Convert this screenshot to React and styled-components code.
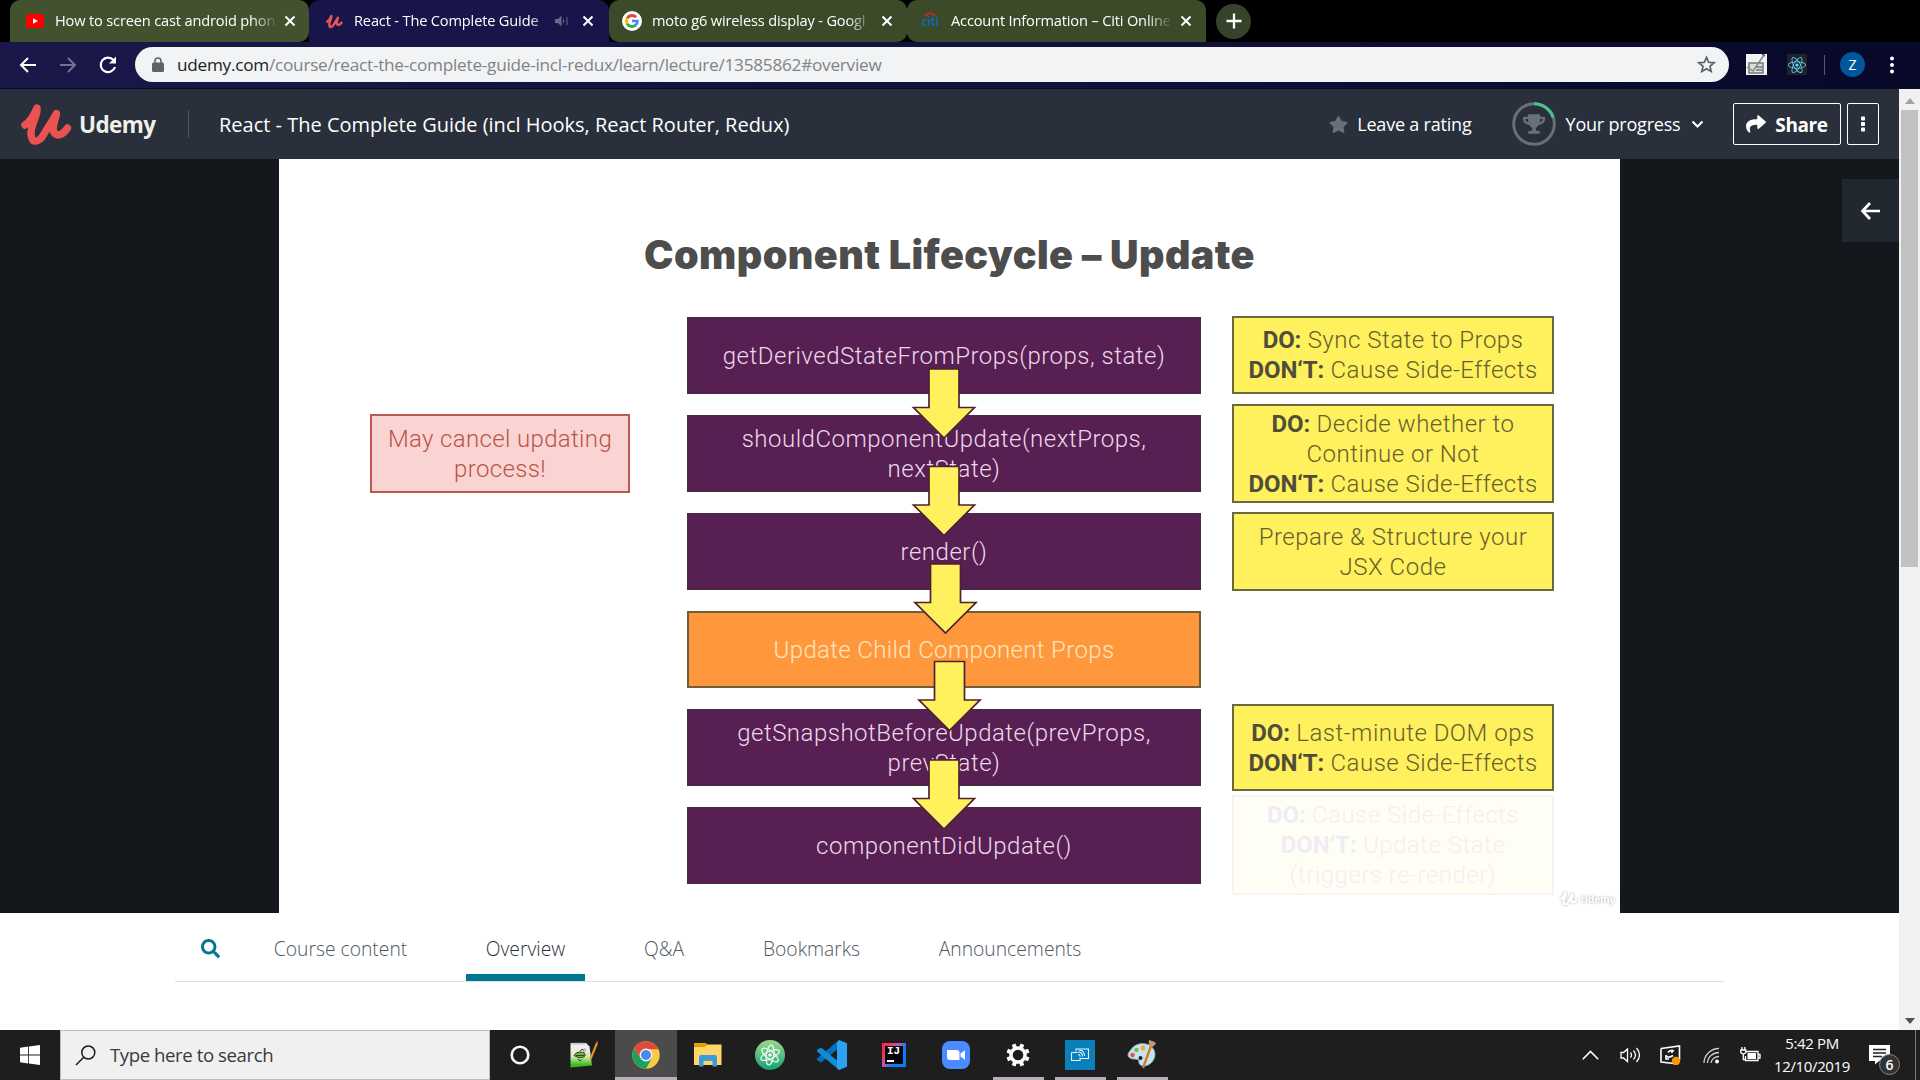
import React from "react";
import styled, { createGlobalStyle, css } from "styled-components";
import { FaStar, FaTrophy, FaShare, FaSearch, FaReact } from "react-icons/fa";

const UI = `"Open Sans", "Noto Sans", sans-serif`;

const GlobalStyle = createGlobalStyle`
  * { box-sizing: border-box; }
  body { margin: 0; background: #000; overflow: hidden; font-family: ${UI}; }
  svg { display: block; flex: none; }
`;

const Screen = styled.div`
  width: 1920px;
  height: 1080px;
  display: flex;
  flex-direction: column;
  overflow: hidden;
`;

const Label = styled.span`
  white-space: nowrap;
  margin: 0 ${(p) => p.$right || 0}px 0 ${(p) => p.$left || 0}px;
  padding-top: ${(p) => p.$drop || 0}px;
  font-size: ${(p) => p.$size}px;
  line-height: 24px;
  letter-spacing: ${(p) => p.$track || 0}px;
  font-weight: ${(p) => p.$weight || 400};
  color: ${(p) => p.$color || "#fff"};
`;

/* ---------- browser chrome ---------- */

const TabStrip = styled.div`
  height: 42px;
  flex: none;
  display: flex;
  align-items: center;
  padding-left: 10px;
  background: #000;
`;

const Tab = styled.div`
  width: ${(p) => p.$width}px;
  height: 42px;
  display: flex;
  align-items: center;
  border-radius: ${(p) => (p.$active ? "10px 10px 0 0" : "10px")};
  border-bottom-left-radius: ${(p) => (p.$first ? 0 : null)};
  border-bottom-right-radius: ${(p) => (p.$last ? 0 : null)};
  padding-left: ${(p) => p.$pad}px;
  background: ${(p) => (p.$active ? "#17154a" : p.$bg)};
  box-shadow: ${(p) => (p.$active ? "0 12px 0 #17154a" : "none")};
`;

const TabIcon = styled.div`
  width: ${(p) => p.$w}px;
  margin-right: ${(p) => p.$gap}px;
  display: flex;
`;

const TabTitle = styled.div`
  width: ${(p) => p.$width}px;
  overflow: hidden;
  white-space: nowrap;
  color: #fff;
  font-size: 14.6px;
  line-height: 24px;
  letter-spacing: -0.16px;
  mask-image: linear-gradient(to right, #000 calc(100% - 26px), transparent);
  margin-top: -2px;
`;

const TabClose = styled.div`
  width: 12px;
  margin-left: ${(p) => p.$left}px;
`;

const TabDivider = styled.div`
  width: 1px;
  height: 26px;
  margin-right: -1px;
  background: #8c9380;
`;

const NewTab = styled.div`
  width: 35px;
  height: 35px;
  margin-left: 10px;
  border-radius: 50%;
  background: #36432a;
  display: grid;
  place-items: center;
`;

const Toolbar = styled.div`
  height: 47px;
  flex: none;
  display: flex;
  align-items: flex-start;
  padding: 5px 0 0 18px;
  border-bottom: 1px solid #0a0a2a;
  background: linear-gradient(to right, #191849, #12123e 50%, #08082a);
`;

const NavButtons = styled.div`
  width: 117px;
  height: 35px;
  display: flex;
  align-items: center;
  gap: 20px;
`;

const AddressBar = styled.div`
  width: 1594px;
  height: 35px;
  border-radius: 18px;
  background: #f1f3f4;
  display: flex;
  align-items: center;
  padding: 0 13px 0 17px;
`;

const Url = styled.div`
  flex: 1;
  margin-left: 13px;
  font-size: 17.2px;
  line-height: 24px;
  letter-spacing: -0.25px;
  color: #7f8387;
  b { font-weight: 400; color: #202124; }
`;

const Extensions = styled.div`
  height: 35px;
  display: flex;
  align-items: center;
  padding-left: 17px;
`;

const ReactBadge = styled.div`
  width: 20px;
  height: 21px;
  margin-left: 20px;
  background: #20232a;
  display: grid;
  place-items: center;
  color: #61dafb;
`;

const ToolbarRule = styled.div`
  width: 1px;
  height: 20px;
  margin: 0 15px 0 17px;
  background: #56567a;
`;

const Avatar = styled.div`
  width: 25px;
  height: 25px;
  margin-right: 24px;
  border-radius: 50%;
  background: #01579b;
  color: #fff;
  font-size: 14px;
  line-height: 25px;
  text-align: center;
`;

/* ---------- page ---------- */

const Viewport = styled.div`
  height: 941px;
  flex: none;
  display: flex;
`;

const Page = styled.div`
  width: 1899px;
  display: flex;
  flex-direction: column;
  background: #fff;
`;

const Scrollbar = styled.div`
  width: 21px;
  background: #f1f1f1;
  display: flex;
  flex-direction: column;
  align-items: center;
  justify-content: space-between;
  padding: 9px 0 6px;
`;

const Thumb = styled.div`
  width: 17px;
  height: 457px;
  margin: 6px 0 auto;
  background: #c1c1c1;
`;

const Header = styled.header`
  height: 70px;
  flex: none;
  display: flex;
  align-items: center;
  padding: 0 20px 0 21px;
  background: #29303b;
`;

const Brand = styled.div`
  width: 117px;
  height: 28px;
  display: flex;
  align-items: center;
  border-right: 1px solid #505763;
  margin-right: 30px;
`;

const HeaderRight = styled.div`
  margin-left: auto;
  display: flex;
  align-items: center;
  color: #686f7a;
`;

const ProgressRing = styled.div`
  width: 44px;
  height: 44px;
  margin: 0 10px 0 40px;
  display: grid;
  place-items: center;
  > * { grid-area: 1 / 1; }
`;

const OutlineButton = styled.button`
  width: ${(p) => p.$width}px;
  height: 42px;
  margin-left: ${(p) => p.$left}px;
  padding: 0;
  display: flex;
  align-items: center;
  justify-content: center;
  gap: 9px;
  color: #fff;
  font-family: inherit;
  border: 1px solid #fff;
  border-radius: 2px;
  background: transparent;
`;

const Stage = styled.section`
  height: 754px;
  flex: none;
  display: flex;
  justify-content: space-between;
  background: #14171c;
  padding-left: 279px;
`;

const Slide = styled.div`
  position: relative;
  width: 1341px;
  height: 754px;
  background: #fff;
  font-family: Roboto, sans-serif;
`;

const SlideTitle = styled.h1`
  margin: 0;
  padding-top: 72px;
  height: 157px;
  text-align: center;
  font-family: Inter, sans-serif;
  font-weight: 900;
  font-size: 39.5px;
  line-height: 48px;
  letter-spacing: 0.4px;
  color: #4d4d4d;
`;

const Columns = styled.div`
  display: flex;
  align-items: flex-start;
  padding-left: 91px;
`;

const Column = styled.div`
  width: ${(p) => p.$width}px;
  margin-right: ${(p) => p.$right || 0}px;
  padding-top: ${(p) => p.$top || 0}px;
  display: flex;
  flex-direction: column;
`;

const tones = {
  purple: css`background: #581f52; border-color: #4b2847; color: #ecd8ea;`,
  orange: css`background: #ff983c; border-color: #705d3e; color: #ffe5bd; letter-spacing: 0.35px;`,
  pink: css`background: #f9d4d2; border-color: #bb5a51; color: #b9544b; letter-spacing: 0.35px;`,
  yellow: css`background: #fff05e; border-color: #6b683f; color: #66602c;`,
  ghost: css`
    background: #fffef5; border-color: #f9f2f4; color: #f4eef3;
    && b { color: #f0ecf6; }
  `,
};

const Box = styled.div`
  height: ${(p) => p.$height}px;
  margin-bottom: ${(p) => p.$gap}px;
  display: flex;
  flex-direction: column;
  justify-content: center;
  text-align: center;
  border: 2px solid;
  font-weight: 300;
  font-size: 24px;
  line-height: 30px;
  letter-spacing: 0.5px;
  white-space: nowrap;
  b { font-weight: 700; letter-spacing: -0.1px; color: #504e38; }
  ${(p) => tones[p.$tone]}
`;

const Overlay = styled.svg`
  position: absolute;
  left: 0;
  top: 0;
`;

const Watermark = styled.div`
  position: absolute;
  right: 5px;
  bottom: 7px;
  display: flex;
  align-items: center;
  gap: 3px;
  color: #fff;
  font: 700 10px/14px "Open Sans", sans-serif;
  letter-spacing: -0.2px;
  filter: drop-shadow(0 0 1px #aaa);
`;

const SideToggle = styled.div`
  width: 57px;
  height: 63px;
  margin-top: 20px;
  background: #222830;
  display: grid;
  place-items: center;
`;

const Tabs = styled.nav`
  height: 69px;
  width: 1549px;
  margin: 0 0 0 175px;
  flex: none;
  display: flex;
  border-bottom: 1px solid #dedfe0;
`;

const TabsSearch = styled.div`
  width: 80px;
  padding: 26px 0 0 26px;
  color: #007791;
`;

const TabLink = styled.div`
  width: ${(p) => p.$width}px;
  height: 68px;
  margin-right: ${(p) => p.$right}px;
  padding-top: 23px;
  text-align: center;
  white-space: nowrap;
  font-size: 19.3px;
  line-height: 26px;
  font-weight: 300;
  color: ${(p) => (p.$active ? "#29303b" : "#505763")};
  border-bottom: 7px solid ${(p) => (p.$active ? "#007791" : "transparent")};
`;

/* ---------- taskbar ---------- */

const Taskbar = styled.footer`
  height: 50px;
  flex: none;
  display: flex;
  background: #1e1e1e;
`;

const StartButton = styled.div`
  width: 60px;
  display: grid;
  place-items: center;
`;

const SearchBox = styled.div`
  width: 430px;
  border: 1px solid #bdbdbd;
  background: #f0f0f0;
  display: flex;
  align-items: center;
  padding-left: 14px;
  gap: 14px;
`;

const AppButton = styled.div`
  width: ${(p) => p.$width || 62}px;
  height: 50px;
  margin-right: ${(p) => p.$right || 0}px;
  display: grid;
  place-items: center;
  background: ${(p) => (p.$active ? "#4b4b4b" : "none")};
  background-image: ${(p) => (p.$open || p.$active ? "linear-gradient(#b5b0b5, #b5b0b5)" : "none")};
  background-repeat: no-repeat;
  background-position: center bottom;
  background-size: ${(p) => (p.$active ? "62px 3px" : "51px 3px")};
`;

const Tray = styled.div`
  margin-left: auto;
  display: flex;
  align-items: center;
`;

const TrayItem = styled.div`
  width: ${(p) => p.$width}px;
  display: flex;
`;

const Clock = styled.div`
  width: 92px;
  margin-right: 11px;
  text-align: center;
  color: #fff;
  font-size: 15px;
  line-height: 23px;
  letter-spacing: -0.35px;
`;

const EndRule = styled.div`
  width: 5px;
  height: 50px;
  margin-left: 14px;
  border-left: 1px solid #777;
`;

/* ---------- drawings ---------- */

const UdemyMark = ({ width = 51, height = 43, color = "#ec5252", stroke = 7.4 }) => (
  <svg width={width} height={height} viewBox="0 0 51 43" fill="none" stroke={color}
    strokeWidth={stroke} strokeLinecap="round" strokeLinejoin="round">
    <path d="M4 22C9 19 13 12 16 5C17 13 9.500 22 10 31C10.500 41 18 40 23 31C27 24 32 17 35.500 10.500C34 18 30.500 25 33 29.500C36 34 42 32 46.500 25" />
  </svg>
);

const Close = ({ left = 0 }) => (
  <TabClose $left={left}>
    <svg width="12" height="12" viewBox="0 0 12 12" stroke="#fff" strokeWidth="2"><path d="M1.500 1.500l9 9M10.500 1.500l-9 9" /></svg>
  </TabClose>
);

const YouTube = () => (
  <svg width="18" height="14" viewBox="0 0 18 14"><rect width="18" height="14" rx="3" fill="#f00" /><path d="M7 4.300l5 2.700l-5 2.700z" fill="#fff" /></svg>
);

const GoogleG = () => (
  <svg width="20" height="20" viewBox="0 0 20 20" fill="none" strokeWidth="2.900">
    <circle cx="10" cy="10" r="10" fill="#fff" />
    <path d="M5.200 7.300A5.500 5.500 0 0 1 14 6.200" stroke="#ea4335" />
    <path d="M5.200 12.700A5.500 5.500 0 0 1 5.200 7.300" stroke="#fbbc05" />
    <path d="M13.600 14.200A5.500 5.500 0 0 1 5.200 12.700" stroke="#34a853" />
    <path d="M10 10h5.500A5.500 5.500 0 0 1 13.400 14.300" stroke="#4285f4" strokeWidth="2.600" />
  </svg>
);

const CitiBox = styled.div`
  width: 18px;
  height: 20px;
  display: grid;
  place-items: center;
  color: #0a6cae;
  font: 600 13px/20px "Open Sans", sans-serif;
  letter-spacing: -0.4px;
  > * { grid-area: 1 / 1; }
  svg { align-self: start; }
`;

const Citi = () => (
  <CitiBox><span>citi</span><svg width="14" height="7" viewBox="0 0 14 7"><path d="M2 5Q7 -1 12 5" stroke="#d9261c" strokeWidth="1.500" fill="none" /></svg></CitiBox>
);

const TabSpeaker = () => (
  <svg width="13" height="12" viewBox="0 0 13 12" fill="#6b6a85"><path d="M0 4h3l3.500-3.500v11L3 8H0zM8 3v6l1.500-3zM11.500 2h1v8h-1z" /></svg>
);

const line = { fill: "none", stroke: "#fff", strokeWidth: 2 };

const Back = ({ color = "#fff" }) => (
  <svg width="20" height="20" viewBox="0 0 20 20" {...line} stroke={color}><path d="M18 10H3.500M10 3L3 10l7 7" /></svg>
);
const Forward = () => (
  <svg width="20" height="20" viewBox="0 0 20 20" {...line} stroke="#73728f"><path d="M2 10h14.500M10 3l7 7l-7 7" /></svg>
);
const Reload = () => (
  <svg width="20" height="20" viewBox="0 0 20 20" {...line} strokeWidth="2.200"><path d="M17 12A7.300 7.300 0 1 1 15.500 5" /><path d="M18 1.500v7h-7z" fill="#fff" stroke="none" /></svg>
);
const Lock = () => (
  <svg width="12" height="16" viewBox="0 0 12 16"><rect y="5.500" width="12" height="9.500" rx="1.500" fill="#5f6368" /><path d="M3 6V4a3 3 0 0 1 6 0v2" fill="none" stroke="#5f6368" strokeWidth="1.600" /></svg>
);
const OutlineStar = () => (
  <svg width="19" height="19" viewBox="0 0 24 24" fill="none" stroke="#5f6368" strokeWidth="2.200"><path d="M12 3l2.700 6.200l6.800.6l-5.100 4.400l1.500 6.600L12 17.300l-5.900 3.500l1.500-6.600L2.500 9.800l6.800-.6z" /></svg>
);
const Checklist = () => (
  <svg width="21" height="21" viewBox="0 0 21 21"><rect width="21" height="21" fill="#f3f3f3" /><path d="M3 9h14v10H3zM10 13h6M10 16h6" fill="#ddd" stroke="#777" strokeWidth="1.500" /><path d="M1 13l6 4L18 1" fill="none" stroke="#888" strokeWidth="1.500" /><path d="M16 0l3 2" stroke="#555" strokeWidth="1.500" /></svg>
);
const Dots = ({ r = 2, gap = 6.500, square }) => (
  <svg width="6" height="20" viewBox="-3 -10 6 20" fill="#fff">
    {[-1, 0, 1].map((i) => square
      ? <rect key={i} x="-2" y={i * gap - 2} width="4" height="4" rx="0.800" />
      : <circle key={i} cy={i * gap} r={r} />)}
  </svg>
);

const Ring = () => (
  <svg width="44" height="44" viewBox="-22 -22 44 44" fill="none" strokeWidth="3">
    <circle r="20.300" stroke="#686f7a" />
    <path d="M0 -20.300A20.300 20.300 0 0 1 19.200 -6.500" stroke="#46c28e" />
  </svg>
);

const Chevron = () => (
  <svg width="13" height="9" viewBox="0 0 13 9" {...line}><path d="M1.500 1.500l5 5l5-5" /></svg>
);

const SideArrow = () => (
  <svg width="21" height="20" viewBox="0 0 21 20" {...line} strokeWidth="2.700"><path d="M20 10H3M10 2L2.500 10l7.500 8" /></svg>
);

const ScrollArrow = ({ up }) => (
  <svg width="10" height="6" viewBox="0 0 10 6" fill={up ? "#a3a3a3" : "#505050"}><path d={up ? "M0 6l5-6l5 6z" : "M0 0h10L5 6z"} /></svg>
);

const arrows = [[665, 210], [665, 307.5], [666.5, 405], [670.5, 502.5], [665, 601]];
const Arrows = () => (
  <Overlay width="1341" height="754" viewBox="0 0 1341 754" fill="#fff05e" stroke="#4e2230" strokeWidth="1.700">
    {arrows.map(([x, y]) => (
      <path key={y} d={`M${x - 15} ${y}h30v38.500h15.500L${x} ${y + 69}L${x - 30.500} ${y + 38.500}h15.500z`} />
    ))}
  </Overlay>
);

const WindowsLogo = () => (
  <svg width="20" height="20" viewBox="0 0 20 20" fill="#fff"><path d="M0 2.800l8.200-1.200v8H0zM9 1.500L20 0v9.600H9zM0 10.400h8.200v8L0 17.200zM9 10.400h11V20L9 18.500z" /></svg>
);
const Magnifier = () => (
  <svg width="21" height="21" viewBox="0 0 21 21" fill="none" stroke="#1b1b1b" strokeWidth="1.500"><circle cx="13.300" cy="7.500" r="6.500" /><path d="M8.700 12.200L1 20" /></svg>
);
const Cortana = () => (
  <svg width="20" height="20" viewBox="0 0 20 20"><circle cx="10" cy="10" r="8.300" fill="none" stroke="#f5f5f5" strokeWidth="2.600" /></svg>
);
const Notepad = () => (
  <svg width="28" height="28" viewBox="0 0 28 28">
    <defs><linearGradient id="np" x2="0" y2="1"><stop offset=".25" stopColor="#eeeeee" /><stop offset=".55" stopColor="#d3eeb4" /><stop offset=".9" stopColor="#3fb81c" /></linearGradient></defs>
    <path d="M.5 2h15.500l3.500 3.500l2.500 19l-21.500 2z" fill="url(#np)" /><path d="M1.500 2.500h14" stroke="#999" strokeWidth="2" strokeDasharray="1 1" />
    <path d="M4 14.500q2-4 6-3.500q6 0 5 4q-4 3.500-11-.5z" fill="#6dbb35" stroke="#33432b" strokeWidth="1" />
    <path d="M6 14.500h8M8 17.500q2 4 4 1M10 10q2-3 4-1" fill="none" stroke="#33432b" strokeWidth="1" />
    <path d="M14 8q-1.500 2 .5 3q2-1 .5-3z" fill="#f6f6f6" stroke="#777" strokeWidth=".7" />
    <path d="M27 2L20.500 18" stroke="#e8991c" strokeWidth="2" /><path d="M26.500.8l1.300.6" stroke="#c55" strokeWidth="2" />
  </svg>
);
const Chrome = () => (
  <svg width="28" height="28" viewBox="-14 -14 28 28">
    <circle r="13.700" fill="#fbcb43" />
    <path d="M-11.860 -6.850A13.700 13.700 0 0 0 0 13.700L5.800 3.200L-5.600 3.200z" fill="#1aa15f" />
    <path d="M-11.860 -6.850A13.700 13.700 0 0 1 12.400 -5.800H0L-5.600 3.200z" fill="#de4b3e" />
    <circle r="6.400" fill="#f4f4f4" /><circle r="5" fill="#4a88f0" />
  </svg>
);
const Folder = () => (
  <svg width="28" height="24" viewBox="0 0 28 24"><path d="M0 0h12l2 3H0z" fill="#e5a100" /><path d="M0 3.500h11l2-2h14.500V22H0z" fill="#ffd768" /><path d="M0 3.500V0h11l2 2l-2 2z" fill="#e5a100" /><path d="M5 23.500V14a2 2 0 0 1 2-2h14a2 2 0 0 1 2 2v9.500h-4.500V18h-9v5.500z" fill="#3d9bdc" /></svg>
);
const Atom = () => (
  <svg width="30" height="30" viewBox="-15 -15 30 30">
    <defs><linearGradient id="at" x2="0" y2="1"><stop stopColor="#9ad88c" /><stop offset="1" stopColor="#16a277" /></linearGradient></defs>
    <circle r="15" fill="url(#at)" />
    <g fill="none" stroke="#eefff0" strokeWidth="1.200"><ellipse rx="10" ry="3.800" transform="rotate(-25)" /><ellipse rx="10" ry="3.800" transform="rotate(38)" /><ellipse rx="10" ry="3.800" transform="rotate(98)" /></g><circle r="1.700" fill="#fff" />
  </svg>
);
const VSCode = () => (
  <svg width="30" height="30" viewBox="0 0 30 30"><path d="M22 0v8L4 22.500L0 20v-1.500z" fill="#0071bc" /><path d="M22 30v-8L4 7.500L0 10v1.500z" fill="#0f8bd8" /><path d="M22 0l8 3.200v23.600L22 30l-2-2.300V2.300z" fill="#29a3f2" /></svg>
);

const IJBox = styled.div`
  width: 24px;
  height: 24px;
  padding: 3px;
  background: linear-gradient(125deg, #fe2857 20%, #c355b0 40%, #087cfa 65%);
  div {
    width: 18px;
    height: 18px;
    padding-left: 2px;
    background: #050505;
    color: #fff;
    font: 700 11px/11px "Liberation Mono", monospace;
  }
  i { display: block; width: 7px; height: 2px; margin-top: 3px; background: #fff; }
`;

const Zoom = () => (
  <svg width="28" height="28" viewBox="0 0 28 28"><rect width="28" height="28" rx="8" fill="#4a8cff" /><path d="M5 9h9.500a3 3 0 0 1 3 3v7H8a3 3 0 0 1-3-3zM18.500 12.500L23 9.300v9.400l-4.500-3.200z" fill="#fff" /></svg>
);
const Gear = () => (
  <svg width="24" height="24" viewBox="-12 -12 24 24" stroke="#fff">
    <circle r="7" fill="none" strokeWidth="3.400" />
    {[0, 45, 90, 135, 180, 225, 270, 315].map((a) => <path key={a} d="M0 -7.500V-11.600" strokeWidth="4" transform={`rotate(${a + 22.5})`} />)}
  </svg>
);
const Connect = () => (
  <svg width="30" height="30" viewBox="0 0 30 30"><rect width="30" height="30" fill="#0a7fba" /><g fill="none" stroke="#e5f5fc" strokeWidth="1.100"><path d="M11 11.500V9H23.500v9.500H15.500M6.500 12.500h6M6.500 12.500v8h8.500v-3M8.500 20.500h5" /><path d="M13 14.500q2 0 2 2M13 12q4.500 0 4.500 4.500M14 10q5.500.5 5.500 6" /></g></svg>
);
const Paint = () => (
  <svg width="30" height="30" viewBox="0 0 30 30">
    <path d="M3 11C7 4 15 2 22 5C29 9 30 17 24 23C18 28 11 26 12 21C12 18 6 20 3 18C0 16 1 13 3 11z" fill="#c5e4f3" stroke="#8fb9cf" />
    <circle cx="5.500" cy="15" r="2.300" fill="#e0584a" /><circle cx="9.500" cy="10" r="2.300" fill="#6fbf4b" /><circle cx="16" cy="8" r="2.400" fill="#f3ad2b" /><circle cx="13.500" cy="18" r="2" fill="#222" />
    <path d="M24 6L16 28" stroke="#d27b28" strokeWidth="2.400" /><path d="M22 0q5 1 7 3q-2 4-5 4q-3-2-2-7z" fill="#c49a6c" />
  </svg>
);

const tray = { fill: "none", stroke: "#fff", strokeWidth: 1.3 };
const TrayUp = () => <svg width="17" height="10" viewBox="0 0 17 10" {...tray} strokeWidth="1.600"><path d="M.8 9.200l7.700-7.700l7.700 7.700" /></svg>;
const Volume = () => <svg width="21" height="18" viewBox="0 0 21 18" {...tray}><path d="M1 6.500h2.500L7.500 3v12.500L3.500 12H1zM10.500 6.500q2 2.500 0 5M13.500 4.500q4 4.500 0 9M16.500 2q6 7 0 14" /></svg>;
const Update = () => <svg width="21" height="20" viewBox="0 0 21 20" {...tray} strokeWidth="1.600"><path d="M1 3.500L19.500 1v14M14 18.500L1 17V3.500M14 6q-4-1.500-6 1.500M13 10.500q-4 3-6.500.5M6 10v4h3M12 4.500v3.500" /><circle cx="16" cy="16" r="4.200" fill="#ff9800" stroke="none" /></svg>;
const Wifi = () => <svg width="17" height="17" viewBox="0 0 17 17" {...tray} stroke="#ccc"><path d="M1 16C1 8 8 1.500 16 1.500M4.500 16C4.500 10 10 5.500 16 5.500M8 16C8.500 12 12 9.500 16 9.500" /><circle cx="14" cy="14.500" r="1.900" fill="#fff" stroke="none" /></svg>;
const Battery = () => <svg width="21" height="16" viewBox="0 0 21 16" {...tray}><path d="M5 4.500h13v9H5.500V9M18.500 7.500h1.500v3.500h-1.500" /><rect x="7.500" y="6" width="8.500" height="6" fill="#fff" stroke="none" /><path d="M.8 3h5v2.500q-2.500 3-5 0zM2 3V0M4.800 3V0M3.300 7v5.500H5" /></svg>;

const NoticeBox = styled.div`
  position: relative;
  width: 32px;
  height: 20px;
`;
const Badge = styled.div`
  position: absolute;
  left: 10px;
  top: 9px;
  width: 21px;
  height: 21px;
  border-radius: 50%;
  border: 1px solid #858585;
  background: #333;
  color: #fff;
  font-size: 14px;
  font-weight: 600;
  line-height: 19px;
  text-align: center;
`;
const Notice = () => (
  <NoticeBox>
    <svg width="21" height="20" viewBox="0 0 21 20"><path d="M0 0h21v16h-11l-4 3.500V16H0z" fill="#fff" /><path d="M4 4.500h13M4 8h13M4 11.500h9" stroke="#222" strokeWidth="1.300" /></svg>
    <Badge>6</Badge>
  </NoticeBox>
);

const DoDont = ({ doText, dontText, extra }) => (
  <>
    <div><b>DO:</b> {doText}</div>
    {extra && <div>{extra}</div>}
    <div><b>DON‘T:</b> {dontText}</div>
  </>
);

export default function App() {
  return (
    <Screen>
      <GlobalStyle />
      <TabStrip>
        <Tab $width={299} $pad={16} $bg="#43522e" $first>
          <TabIcon $w={18} $gap={11}><YouTube /></TabIcon>
          <TabTitle $width={223}>How to screen cast android phon</TabTitle>
          <Close left={6} />
        </Tab>
        <Tab $width={300} $pad={17} $active>
          <TabIcon $w={17} $gap={11}><UdemyMark width={17} height={15} /></TabIcon>
          <TabTitle $width={201}>React - The Complete Guide</TabTitle>
          <TabIcon $w={13} $gap={14}><TabSpeaker /></TabIcon>
          <Close />
        </Tab>
        <Tab $width={298} $pad={13} $bg="#3b4a29">
          <TabIcon $w={20} $gap={10}><GoogleG /></TabIcon>
          <TabTitle $width={221}>moto g6 wireless display - Googl</TabTitle>
          <Close left={8} />
        </Tab>
        <TabDivider />
        <Tab $width={299} $pad={14} $bg="#3b4a29" $last>
          <TabIcon $w={18} $gap={12}><Citi /></TabIcon>
          <TabTitle $width={222}>Account Information – Citi Online</TabTitle>
          <Close left={7} />
        </Tab>
        <NewTab><svg width="16" height="16" viewBox="0 0 16 16" {...line} strokeWidth="2.300"><path d="M8 .5v15M.5 8h15" /></svg></NewTab>
      </TabStrip>
      <Toolbar>
        <NavButtons><Back /><Forward /><Reload /></NavButtons>
        <AddressBar>
          <Lock />
          <Url><b>udemy.com</b>/course/react-the-complete-guide-incl-redux/learn/lecture/13585862#overview</Url>
          <OutlineStar />
        </AddressBar>
        <Extensions>
          <Checklist />
          <ReactBadge><FaReact size={18} /></ReactBadge>
          <ToolbarRule />
          <Avatar>Z</Avatar>
          <Dots />
        </Extensions>
      </Toolbar>
      <Viewport>
        <Page>
          <Header>
            <UdemyMark />
            <Brand><Label $size={22.5} $left={7} $drop={1} $weight={700} $color="#f0efe8" $track={-0.6}>Udemy</Label></Brand>
            <Label $size={20} $drop={1}>React - The Complete Guide (incl Hooks, React Router, Redux)</Label>
            <HeaderRight>
              <FaStar size={19} />
              <Label $size={18} $left={9} $track={-0.2}>Leave a rating</Label>
              <ProgressRing><Ring /><FaTrophy size={22} /></ProgressRing>
              <Label $size={18} $right={10.5} $track={-0.2}>Your progress</Label>
              <Chevron />
              <OutlineButton $width={108} $left={29}>
                <FaShare size={20} />
                <Label $size={19} $drop={2} $weight={700} $track={-0.4}>Share</Label>
              </OutlineButton>
              <OutlineButton $width={32} $left={6}><Dots square gap={5.500} /></OutlineButton>
            </HeaderRight>
          </Header>
          <Stage>
            <Slide>
              <SlideTitle>Component Lifecycle – Update</SlideTitle>
              <Columns>
                <Column $width={260} $right={57} $top={98}>
                  <Box $tone="pink" $height={79} $gap={0}><div>May cancel updating</div><div>process!</div></Box>
                </Column>
                <Column $width={514} $right={31} $top={1}>
                  <Box $tone="purple" $height={77} $gap={21}>getDerivedStateFromProps(props, state)</Box>
                  <Box $tone="purple" $height={77} $gap={21}><div>shouldComponentUpdate(nextProps,</div><div>nextState)</div></Box>
                  <Box $tone="purple" $height={77} $gap={21}>render()</Box>
                  <Box $tone="orange" $height={77} $gap={21}>Update Child Component Props</Box>
                  <Box $tone="purple" $height={77} $gap={21}><div>getSnapshotBeforeUpdate(prevProps,</div><div>prevState)</div></Box>
                  <Box $tone="purple" $height={77} $gap={0}>componentDidUpdate()</Box>
                </Column>
                <Column $width={322}>
                  <Box $tone="yellow" $height={78} $gap={10}><DoDont doText="Sync State to Props" dontText="Cause Side-Effects" /></Box>
                  <Box $tone="yellow" $height={99} $gap={9}><DoDont doText="Decide whether to" extra="Continue or Not" dontText="Cause Side-Effects" /></Box>
                  <Box $tone="yellow" $height={79} $gap={113}><div>Prepare &amp; Structure your</div><div>JSX Code</div></Box>
                  <Box $tone="yellow" $height={87} $gap={4}><DoDont doText="Last-minute DOM ops" dontText="Cause Side-Effects" /></Box>
                  <Box $tone="ghost" $height={100} $gap={0}><DoDont doText="Cause Side-Effects" dontText="Update State" /><div>(triggers re-render)</div></Box>
                </Column>
              </Columns>
              <Arrows />
              <Watermark><UdemyMark width={18} height={15} color="#fff" />Udemy</Watermark>
            </Slide>
            <SideToggle><SideArrow /></SideToggle>
          </Stage>
          <Tabs>
            <TabsSearch><FaSearch size={19} /></TabsSearch>
            <TabLink $width={171} $right={40}>Course content</TabLink>
            <TabLink $width={119} $right={40} $active>Overview</TabLink>
            <TabLink $width={78} $right={40}>Q&amp;A</TabLink>
            <TabLink $width={137} $right={40}>Bookmarks</TabLink>
            <TabLink $width={180} $right={0}>Announcements</TabLink>
          </Tabs>
        </Page>
        <Scrollbar><ScrollArrow up /><Thumb /><ScrollArrow /></Scrollbar>
      </Viewport>
      <Taskbar>
        <StartButton><WindowsLogo /></StartButton>
        <SearchBox><Magnifier /><Label $size={18.6} $track={-0.42} $color="#3a3a3a">Type here to search</Label></SearchBox>
        <AppButton $width={60} $right={3}><Cortana /></AppButton>
        <AppButton><Notepad /></AppButton>
        <AppButton $active><Chrome /></AppButton>
        <AppButton><Folder /></AppButton>
        <AppButton><Atom /></AppButton>
        <AppButton><VSCode /></AppButton>
        <AppButton><IJBox><div>IJ<i /></div></IJBox></AppButton>
        <AppButton><Zoom /></AppButton>
        <AppButton $open><Gear /></AppButton>
        <AppButton $open><Connect /></AppButton>
        <AppButton $open><Paint /></AppButton>
        <Tray>
          <TrayItem $width={38}><TrayUp /></TrayItem>
          <TrayItem $width={40}><Volume /></TrayItem>
          <TrayItem $width={43}><Update /></TrayItem>
          <TrayItem $width={37}><Wifi /></TrayItem>
          <TrayItem $width={26}><Battery /></TrayItem>
          <Clock><div>5:42 PM</div><div>12/10/2019</div></Clock>
          <Notice />
          <EndRule />
        </Tray>
      </Taskbar>
    </Screen>
  );
}
